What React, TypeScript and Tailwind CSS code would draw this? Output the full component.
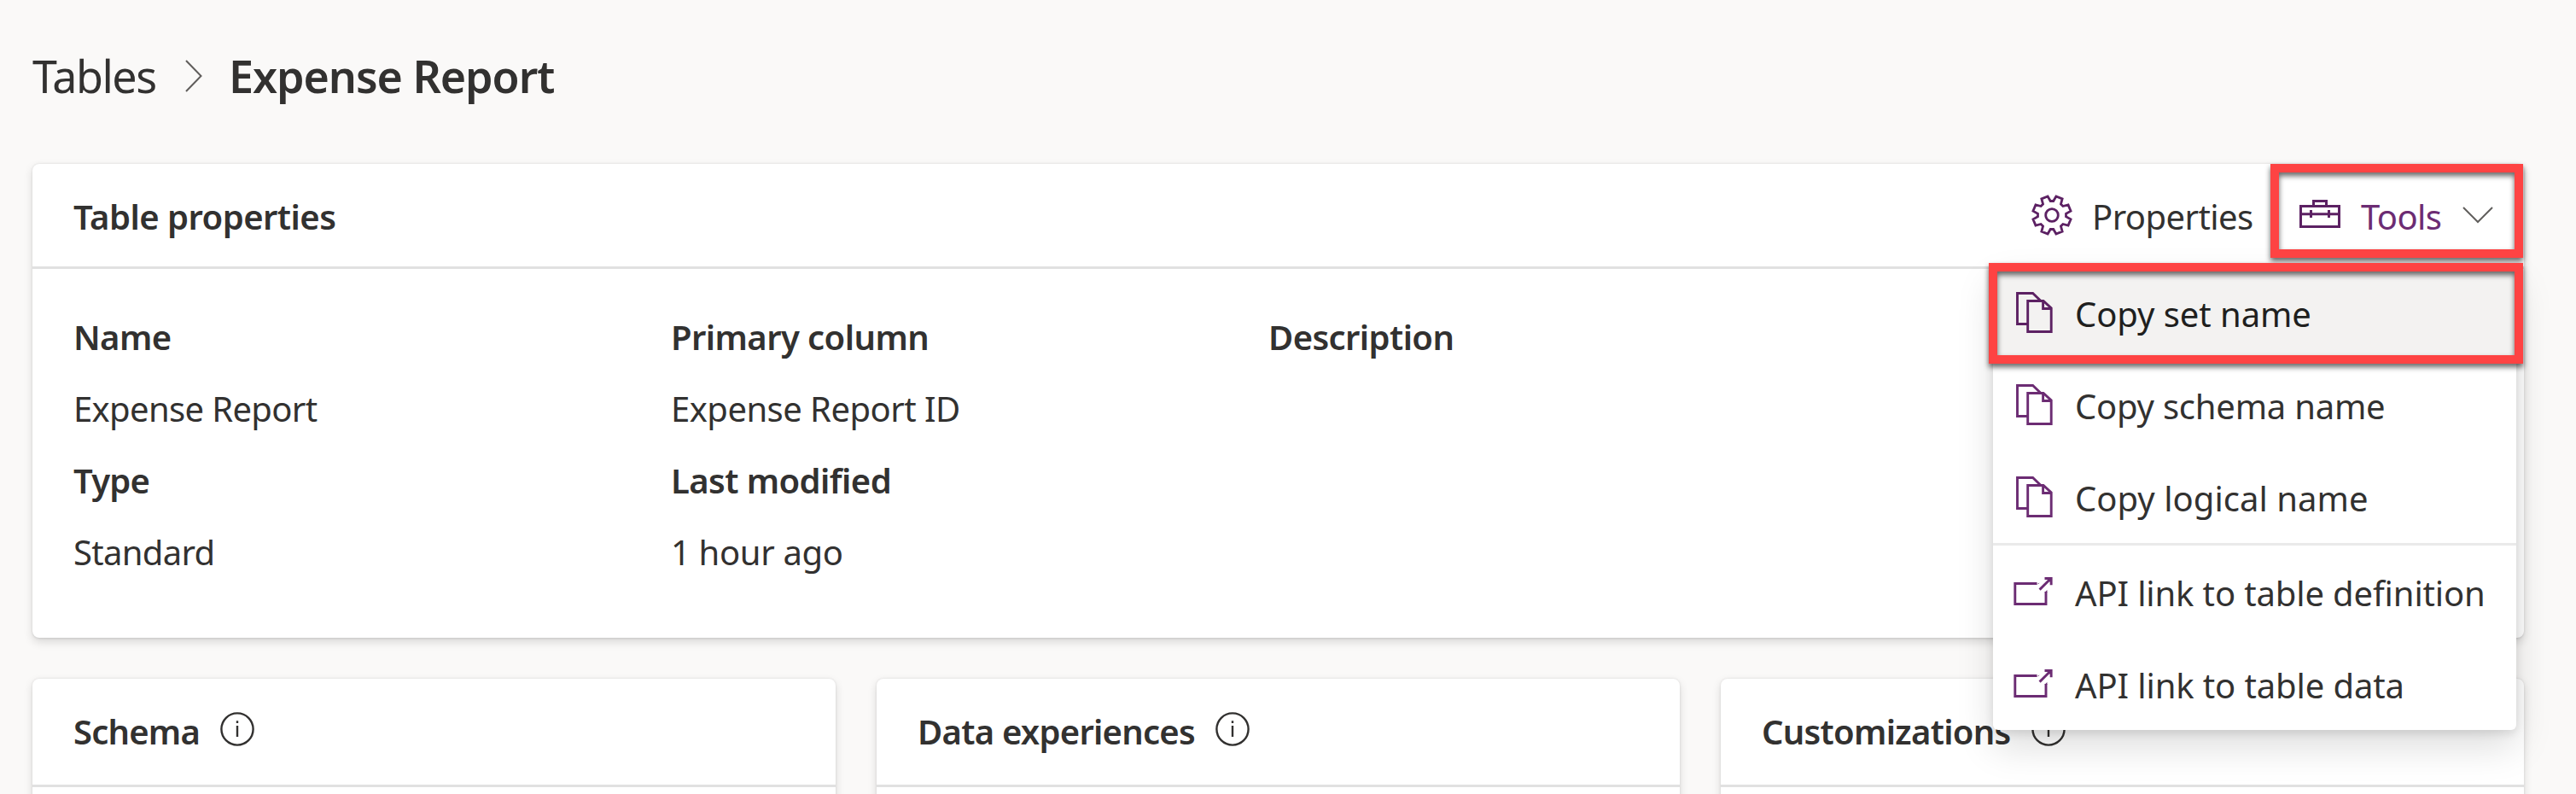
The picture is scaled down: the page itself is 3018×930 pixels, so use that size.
import type { ReactNode } from "react";

const polar = (r: number, deg: number) => {
  const a = (deg * Math.PI) / 180;
  return `${(24 + r * Math.sin(a)).toFixed(2)} ${(24 - r * Math.cos(a)).toFixed(2)}`;
};

const gearPath =
  "M" +
  [0, 45, 90, 135, 180, 225, 270, 315]
    .flatMap((d) => [polar(16.6, d - 6), polar(16.6, d + 6), polar(22.6, d + 12.5), polar(22.6, d + 32.5)])
    .join("L") +
  "Z";

function GearIcon() {
  return (
    <svg viewBox="0 0 48 48" className="h-12 w-12 shrink-0" fill="none" stroke="#5c2163" strokeWidth="2.8">
      <path d={gearPath} />
      <circle cx="24" cy="24" r="7.3" />
    </svg>
  );
}

function ToolboxIcon() {
  return (
    <svg viewBox="0 0 48 33" className="mb-1 h-[33px] w-12 shrink-0" fill="none" stroke="#5c2163" strokeWidth="3">
      <path d="M1.5 7.5H46.5V31.5H1.5ZM16.5 7.5V1.5H31.5V7.5M1.5 16.8H46.5M13.5 12V21M34.5 12V21" />
    </svg>
  );
}

function CopyIcon({ color }: { color: string }) {
  return (
    <svg viewBox="0 0 43 48" className="h-12 w-[43px] shrink-0" fill="none" stroke={color} strokeWidth="2.9">
      <path d="M13.5 37.5H1.5V1.5H19.6L29 10.5M13.7 10.5H32L41.2 19V46.5H13.7ZM31.6 10.5V19.5H41.2" />
    </svg>
  );
}

function LinkIcon() {
  return (
    <svg viewBox="0 0 46 34" className="h-[34px] w-[46px] shrink-0" fill="none" stroke="#6c2c73" strokeWidth="2.9">
      <path d="M27.5 7.5H1.8V31.5H38V17" />
      <path d="M30 7.5V6H30.2L27.2 9H26ZM36.6 18V17.8L39.4 15V18Z" fill="#6c2c73" stroke="none" />
      <path d="M30.6 14.6L42.5 2.8" />
      <path d="M36.5 0H45.6V9.3H42.7V5.8L39.6 3H36.5Z" fill="#6c2c73" stroke="none" />
    </svg>
  );
}

function InfoIcon() {
  return (
    <svg viewBox="0 0 40 40" className="h-10 w-10 shrink-0" fill="none" stroke="#323130" strokeWidth="2.4">
      <circle cx="20" cy="20" r="18.6" />
      <path d="M20 16V29M20 10.3V13" />
    </svg>
  );
}

function Field({ label, labelClass, value, valueClass }: { label: string; labelClass: string; value?: string; valueClass?: string }) {
  return (
    <div className="h-[168px] leading-[84px]">
      <div className={`font-semibold ${labelClass}`}>{label}</div>
      {value && <div className={valueClass}>{value}</div>}
    </div>
  );
}

function MenuItem({ icon, label, textClass, active }: { icon: ReactNode; label: string; textClass: string; active?: boolean }) {
  return (
    <div className={`flex h-[108px] items-center pl-6 ${active ? "bg-[#f3f2f1] text-[#201f1e]" : ""}`}>
      <span className="flex w-[72px] justify-start">{icon}</span>
      <span className={`whitespace-nowrap pt-[3px] ${textClass}`}>{label}</span>
    </div>
  );
}

function SectionCard({ title, titleClass }: { title: string; titleClass: string }) {
  return (
    <section className="h-[400px] flex-1 rounded-lg bg-white shadow-[0_4.8px_10.8px_rgba(0,0,0,0.132),0_0.9px_2.7px_rgba(0,0,0,0.108)]">
      <header className="flex h-[127px] items-center border-b-[3px] border-[#e1e1e1] pl-12">
        <h3 className={`font-semibold ${titleClass}`}>{title}</h3>
        <div className="mb-1.5 ml-6">
          <InfoIcon />
        </div>
      </header>
    </section>
  );
}

export default function App() {
  return (
    <div className="relative h-[930px] w-[3018px] overflow-hidden bg-[#faf9f8] pl-[38px] pr-[61px] font-['Noto_Sans',sans-serif] text-[40px] text-[#323130]">
      <nav className="flex h-[192px] items-start pt-[53px] text-[52px] leading-[72px]">
        <span className="w-[179px] tracking-[-1.5px]">Tables</span>
        <svg viewBox="0 0 20 38" className="mr-[31px] mt-[17px] h-[38px] w-5" fill="none" stroke="#605e5c" strokeWidth="2">
          <path d="M1 1L18.5 19L1 37" />
        </svg>
        <h1 className="font-semibold tracking-[-1.06px]">Expense Report</h1>
      </nav>

      <section className="h-[555px] rounded-lg bg-white shadow-[0_4.8px_10.8px_rgba(0,0,0,0.132),0_0.9px_2.7px_rgba(0,0,0,0.108)]">
        <header className="flex h-[123px] items-center border-b-[3px] border-[#e1e1e1] pl-12">
          <h2 className="flex-1 pt-[3px] font-semibold tracking-[-0.53px]">Table properties</h2>
          <div className="flex items-center pr-9">
            <GearIcon />
            <span className="ml-[23px] w-[243px] pt-[3px] tracking-[-0.57px]">Properties</span>
            <ToolboxIcon />
            <span className="ml-6 w-[119px] pt-[3px] tracking-[-0.6px] text-[#6c2c73]">Tools</span>
            <svg viewBox="0 0 36 20" className="h-5 w-9" fill="none" stroke="#605e5c" strokeWidth="2">
              <path d="M1 1L18 18L35 1" />
            </svg>
          </div>
        </header>
        <div className="grid grid-cols-[700px_700px_700px] pl-12 pt-[38px]">
          <Field label="Name" labelClass="tracking-[-0.6px]" value="Expense Report" valueClass="tracking-[-0.65px]" />
          <Field label="Primary column" labelClass="tracking-[-0.58px]" value="Expense Report ID" valueClass="tracking-[-0.54px]" />
          <Field label="Description" labelClass="tracking-[-0.6px]" />
          <Field label="Type" labelClass="tracking-[-0.83px]" value="Standard" valueClass="tracking-[-0.7px]" />
          <Field label="Last modified" labelClass="tracking-[-0.58px]" value="1 hour ago" valueClass="tracking-[-0.35px]" />
        </div>
      </section>

      <div className="mt-12 flex gap-12">
        <SectionCard title="Schema" titleClass="tracking-[-0.8px]" />
        <SectionCard title="Data experiences" titleClass="tracking-[-0.75px]" />
        <SectionCard title="Customizations" titleClass="tracking-[-0.72px]" />
      </div>

      <div className="absolute left-[2335px] top-[312px] w-[613px] rounded-md bg-white shadow-[0_19.2px_43.2px_rgba(0,0,0,0.132),0_3.6px_10.8px_rgba(0,0,0,0.108)]">
        <MenuItem active icon={<span className="ml-[3px]"><CopyIcon color="#5c2163" /></span>} label="Copy set name" textClass="tracking-[-0.07px]" />
        <MenuItem icon={<span className="ml-[3px]"><CopyIcon color="#6c2c73" /></span>} label="Copy schema name" textClass="tracking-[-0.23px]" />
        <MenuItem icon={<span className="ml-[3px]"><CopyIcon color="#6c2c73" /></span>} label="Copy logical name" textClass="tracking-[0.03px]" />
        <div className="h-[3px] bg-[#eaeaea]" />
        <MenuItem icon={<LinkIcon />} label="API link to table definition" textClass="tracking-[-0.14px]" />
        <MenuItem icon={<LinkIcon />} label="API link to table data" textClass="tracking-[-0.12px]" />
      </div>

      <div className="absolute left-[2660px] top-[192px] h-[110px] w-[296px] border-[10px] border-[#fe4343] drop-shadow-[0_4px_3px_rgba(0,0,0,0.6)]" />
      <div className="absolute left-[2330px] top-[308px] h-[118px] w-[626px] border-[10px] border-[#fe4343] drop-shadow-[0_4px_3px_rgba(0,0,0,0.6)]" />
    </div>
  );
}
